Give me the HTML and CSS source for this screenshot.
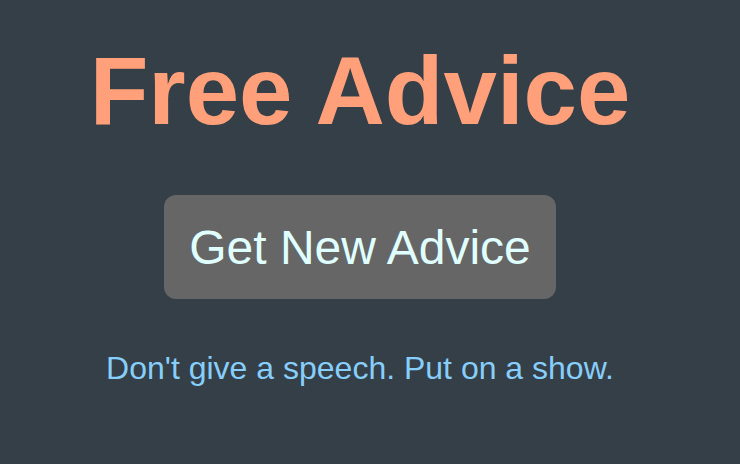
FILE: index.html
```html
<!DOCTYPE html>
<html lang="en">
<head>
<meta charset="utf-8">
<title>Free Advice</title>
<link rel="stylesheet" href="styles.css">
</head>
<body>
<main class="app">
  <h1 class="title">Free Advice</h1>
  <button class="advice-btn" type="button">Get New Advice</button>
  <p class="quote">Don't give a speech. Put on a show.</p>
</main>
</body>
</html>
```

FILE: styles.css
```css
html, body {
  margin: 0;
  padding: 0;
  height: 100%;
  background: #343f47;
}
body {
  font-family: "Liberation Sans", Arial, sans-serif;
}
.app {
  width: 720px;
  display: flex;
  flex-direction: column;
  align-items: center;
  padding-top: 36px;
}
.title {
  margin: 0;
  font-size: 96px;
  line-height: 110px;
  font-weight: bold;
  color: #ffa07a;
}
.advice-btn {
  margin-top: 49px;
  font-family: inherit;
  font-size: 48px;
  line-height: 56px;
  padding: 25px 25px 23px;
  height: 104px;
  border: 0;
  border-radius: 12px;
  background: #666666;
  color: #e0ffff;
}
.quote {
  margin: 51px 0 0;
  font-size: 32px;
  line-height: 37px;
  color: #87cefa;
}
```
